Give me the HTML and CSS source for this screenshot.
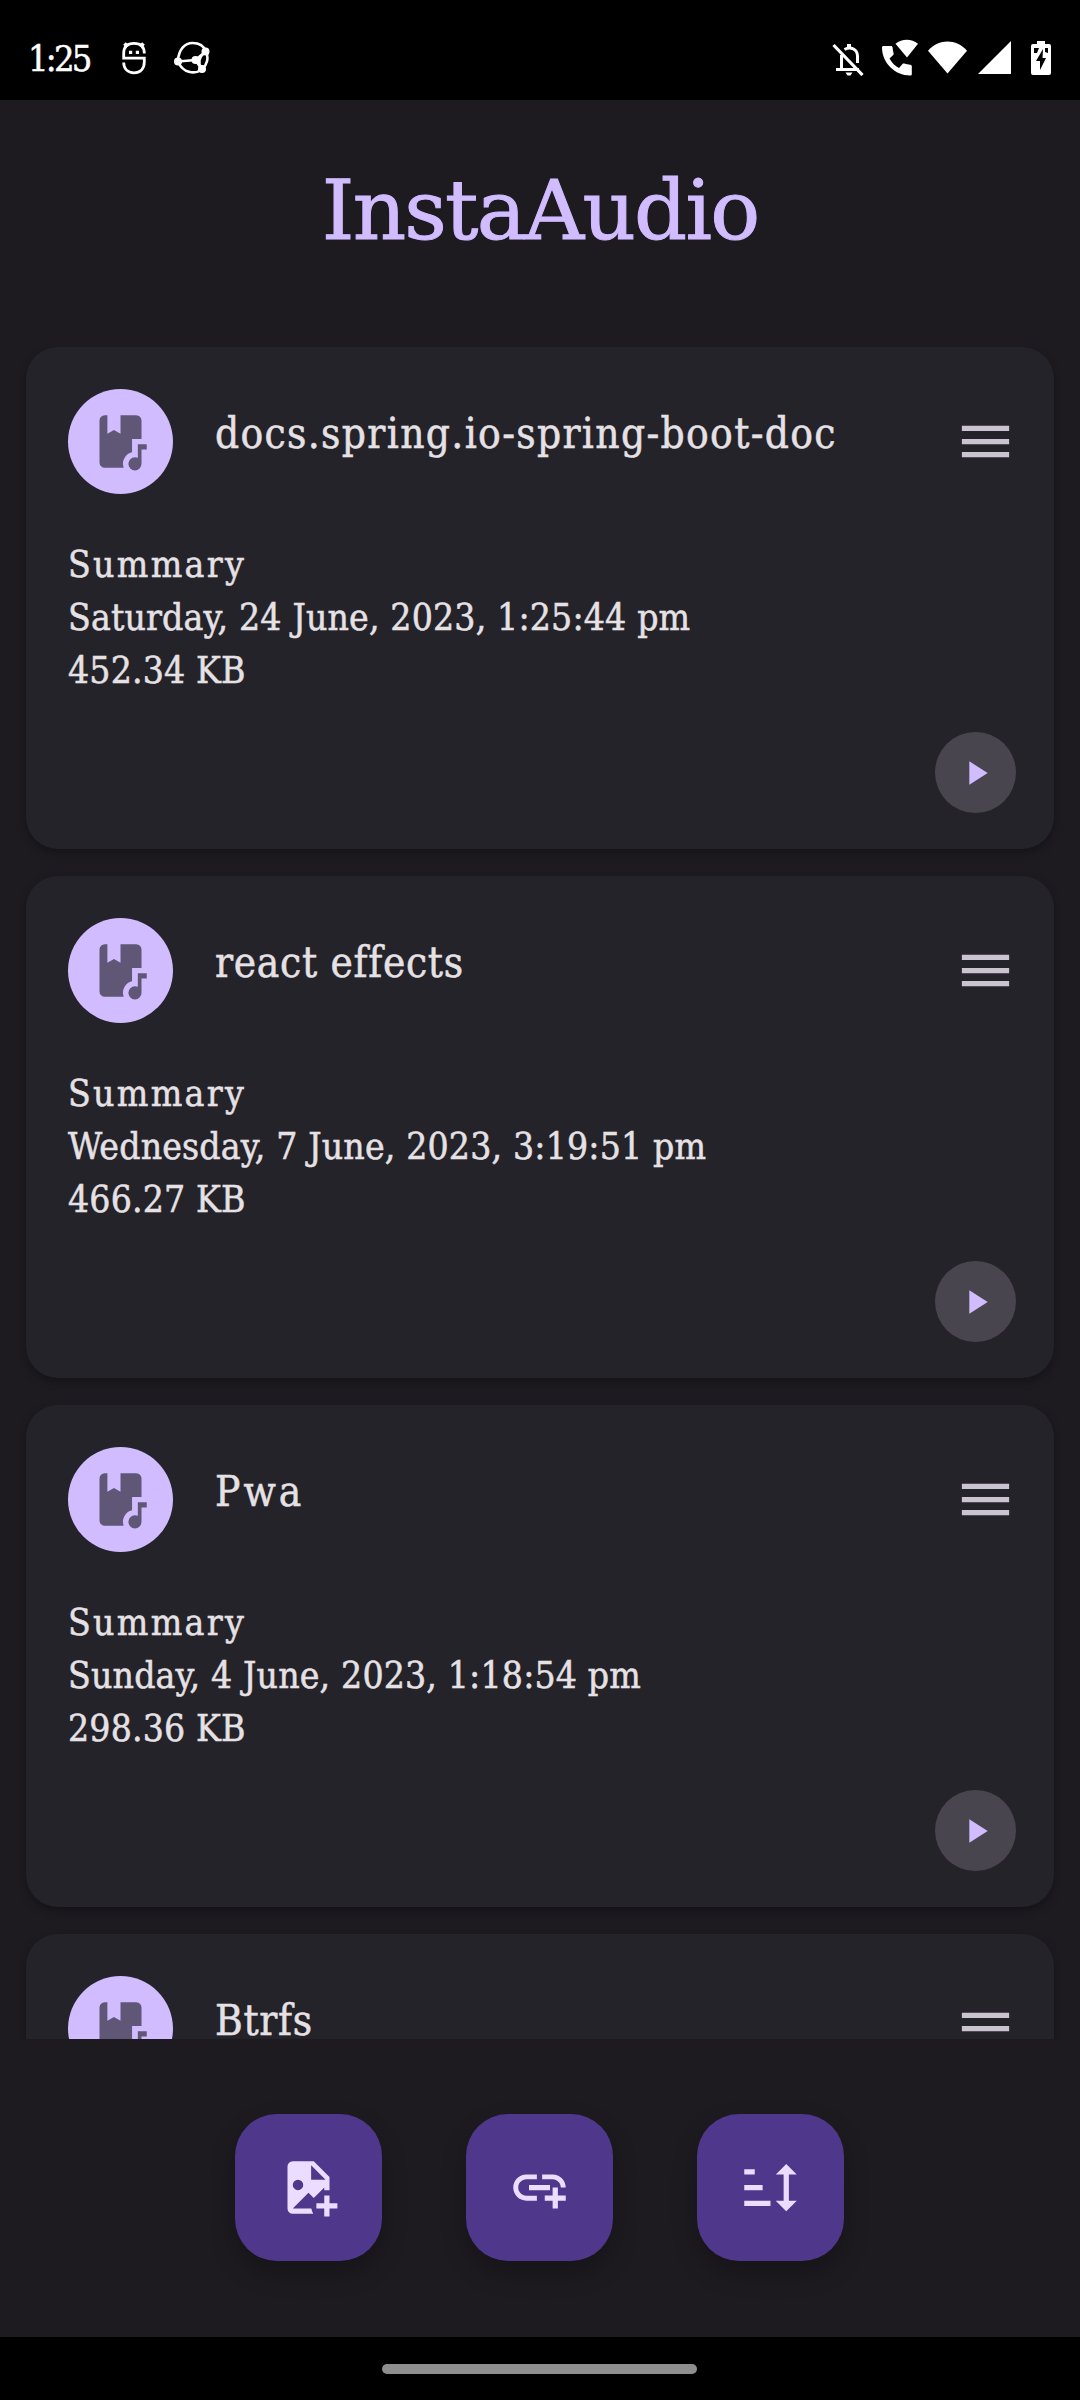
FILE: index.html
```
<!DOCTYPE html>
<html lang="en">
<head>
<meta charset="utf-8">
<title>InstaAudio</title>
<link rel="stylesheet" href="styles.css">
</head>
<body>
<svg width="0" height="0" class="defs" aria-hidden="true">
  <symbol id="book-music" viewBox="0 0 24 24">
    <path d="M16.4 11H20V4a2 2 0 0 0-2-2h-6v7L9.5 7.6 7 9V2H6a2 2 0 0 0-2 2v16a2 2 0 0 0 2 2h7.2A4.5 4.5 0 0 1 16.4 16.1z"/>
    <path d="M18.6 13H22v2h-2v5.5a2.5 2.5 0 1 1-2.5-2.5c.4 0 .75.07 1.1.23z"/>
  </symbol>
  <symbol id="menu" viewBox="0 0 24 24"><path d="M3 18h18v-2H3v2zm0-5h18v-2H3v2zm0-7v2h18V6H3z"/></symbol>
  <symbol id="play" viewBox="0 0 24 24"><path d="M8 5v14l11-7z"/></symbol>
</svg>
<div class="screen">
  <header class="status">
    <div class="status-left">
      <span class="clock">1:25</span>
      <svg class="st-face" viewBox="0 0 24 34" fill="none" stroke="#fff" stroke-width="2.8">
        <path d="M22.300 12.500C22.300 6 19 2.400 12 2.400S1.700 6 1.700 12.500V17.200H22.300V21C22.300 28 18 31.800 12 31.800S1.700 28 1.700 21.500"/>
        <path d="M5.500 5.500 2.500 2.500M18.500 5.500l3-3" stroke-width="3.800"/>
        <path d="M7 11.300h3.200M13.800 11.300h3.200" stroke-width="3.200"/>
      </svg>
      <svg class="st-orbit" viewBox="0 0 36 34" fill="none" stroke="#fff" stroke-width="2.600">
        <path d="M4 19C5 8 11 2 18.500 2 25 2 30 5 32 10.500 35 17 33 24 28 28.500 20 34 9 31.500 4.500 21.500"/>
        <path d="M4 20.500 21.500 19 31 11M21.500 19l6 9M30 12c-5 4-6 10-3 15"/>
        <g fill="#fff" stroke="none"><circle cx="4" cy="20.500" r="4"/><circle cx="21.500" cy="19" r="4"/><circle cx="31.500" cy="10.500" r="4"/><circle cx="28" cy="28" r="4"/></g>
      </svg>
    </div>
    <div class="status-right">
      <svg class="st-bell" viewBox="0 0 32 34" fill="none" stroke="#fff" stroke-width="3">
        <path d="M4 27.500h23M9.500 27.500V13M12.500 7.500C19 3.500 25.500 8 25.500 14v7"/>
        <path d="M17 2v5" stroke-width="4"/><path d="M13.500 30.500h7l-2 3h-3z" fill="#fff" stroke="none"/>
        <path d="M1.500 3 30.500 33" stroke-width="3.200"/>
      </svg>
      <svg class="st-call" viewBox="0 0 36 37" fill="#fff">
        <path d="M1.500 7h7.500c1 0 1.500.6 1.600 1.500.1 2 .5 4 1 5.700.2.7 0 1.300-.4 1.700L7.500 19.500c2.500 4.500 5.500 7.500 9.500 9.500l3.500-4c.5-.5 1.100-.6 1.700-.4 1.900.6 4 1 6 1.100 1 .1 1.600.7 1.600 1.600V35c0 1-.6 1.500-1.600 1.500C13 36.500 0 24 0 8.500 0 7.600.6 7 1.500 7z"/>
        <path d="M13.500 4.800C20-.6 29.500-.6 36 4.800L25 18.500z"/>
      </svg>
      <svg class="st-wifi" viewBox="0 0 40 33" fill="#fff"><path d="M0 9.500C11-3 29-3 40 9.500L20 33z"/></svg>
      <svg class="st-cell" viewBox="0 0 33 33" fill="#fff"><path d="M33 0v33H0z"/></svg>
      <svg class="st-batt" viewBox="0 0 20 34" fill="#fff" fill-rule="evenodd"><path d="M6 0h8v3h4a2 2 0 0 1 2 2v27a2 2 0 0 1-2 2H2a2 2 0 0 1-2-2V5a2 2 0 0 1 2-2h4zM3 7v5h3l2-5zM14 7v4l3 1V7zM12 8 5 20h4v9l6-12h-3.500z"/></svg>
    </div>
  </header>

  <h1 class="title"><span>InstaAudio</span></h1>

  <main class="list">
    <article class="card">
      <div class="card-head">
        <div class="avatar"><svg><use href="#book-music"/></svg></div>
        <h2 class="name name-long">docs.spring.io-spring-boot-doc</h2>
        <svg class="menu"><use href="#menu"/></svg>
      </div>
      <div class="meta"><p class="kind">Summary</p><p>Saturday, 24 June, 2023, 1:25:44 pm</p><p>452.34 KB</p></div>
      <div class="play"><svg><use href="#play"/></svg></div>
    </article>
    <article class="card">
      <div class="card-head">
        <div class="avatar"><svg><use href="#book-music"/></svg></div>
        <h2 class="name">react effects</h2>
        <svg class="menu"><use href="#menu"/></svg>
      </div>
      <div class="meta"><p class="kind">Summary</p><p>Wednesday, 7 June, 2023, 3:19:51 pm</p><p>466.27 KB</p></div>
      <div class="play"><svg><use href="#play"/></svg></div>
    </article>
    <article class="card">
      <div class="card-head">
        <div class="avatar"><svg><use href="#book-music"/></svg></div>
        <h2 class="name name-wide">Pwa</h2>
        <svg class="menu"><use href="#menu"/></svg>
      </div>
      <div class="meta"><p class="kind">Summary</p><p>Sunday, 4 June, 2023, 1:18:54 pm</p><p>298.36 KB</p></div>
      <div class="play"><svg><use href="#play"/></svg></div>
    </article>
    <article class="card">
      <div class="card-head">
        <div class="avatar"><svg><use href="#book-music"/></svg></div>
        <h2 class="name">Btrfs</h2>
        <svg class="menu"><use href="#menu"/></svg>
      </div>
    </article>
  </main>

  <div class="actions">
    <div class="fab"><svg viewBox="0 0 24 24"><path fill-rule="evenodd" d="M6 2h8l6 6v5.090a6 6 0 0 0-2 0V12l-4 4-2-2-6 6h7.090c.12.720.370 1.390.720 2H6a2 2 0 0 1-2-2V4a2 2 0 0 1 2-2zM13 3.500V9h5.500zM8 9a2 2 0 1 0 0 4 2 2 0 0 0 0-4z"/><path d="M18 15h2v3h3v2h-3v3h-2v-3h-3v-2h3z"/></svg></div>
    <div class="fab"><svg viewBox="0 0 24 24"><path d="M8 11h8v2H8zM20.100 12H22c0-2.760-2.240-5-5-5h-4v1.900h4c1.710 0 3.100 1.390 3.100 3.100zM3.900 12c0-1.710 1.390-3.100 3.100-3.100h4V7H7c-2.760 0-5 2.240-5 5s2.240 5 5 5h4v-1.900H7c-1.710 0-3.100-1.390-3.100-3.100zM19 12h-2v3h-3v2h3v3h2v-3h3v-2h-3z"/></svg></div>
    <div class="fab"><svg viewBox="0 0 24 24"><path d="M2 5h4v2H2zM2 11h7v2H2zM2 17h10v2H2zM18 3l4 4h-3v10h3l-4 4-4-4h3V7h-3z"/></svg></div>
  </div>

  <footer class="nav"><div class="pill"></div></footer>
</div>
</body>
</html>
```
FILE: styles.css
```
* { box-sizing: border-box; margin: 0; padding: 0; }
body {
  background: #1d1b20;
  font-family: "Roboto Slab", "DejaVu Serif Condensed", "DejaVu Serif", serif;
  color: #e6e1e5;
  -webkit-text-stroke: .5px currentColor;
}
svg { display: block; flex: none; }
.defs { position: absolute; }
.screen { width: 1080px; height: 2400px; display: flex; flex-direction: column; overflow: hidden; }

.status { height: 100px; flex: none; background: #000; color: #fff; display: flex; justify-content: space-between; padding: 0 29px 0 28px; }
.status-left, .status-right { display: flex; align-items: flex-start; }
.clock { width: 94px; font-size: 36px; line-height: 44px; margin-top: 37px; white-space: nowrap; letter-spacing: -2.8px; }
.st-face { width: 24px; height: 34px; margin-top: 41px; }
.st-orbit { width: 36px; height: 34px; margin: 41px 0 0 28px; }
.st-bell { width: 32px; height: 34px; margin: 42px 18px 0 0; }
.st-call { width: 36px; height: 37px; margin: 39px 10px 0 0; }
.st-wifi { width: 39px; height: 33px; margin: 41px 11px 0 0; }
.st-cell { width: 33px; height: 33px; margin: 41px 20px 0 0; }
.st-batt { width: 20px; height: 34px; margin-top: 41px; }

.title { height: 247px; flex: none; color: #d0bcff; font-family: "Roboto Slab", "DejaVu Serif", serif; font-size: 83px; line-height: 110px; font-weight: 400; text-align: center; padding-top: 56px; letter-spacing: -1.8px; -webkit-text-stroke-width: 1px; }

.list { height: 1692px; flex: none; overflow: hidden; padding: 0 26px; display: flex; flex-direction: column; gap: 27px; }
.card { height: 502px; flex: none; background: #242329; border-radius: 32px; padding: 42px 38px 36px 42px; display: flex; flex-direction: column; box-shadow: 0 4px 8px rgba(0, 0, 0, .3); }
.card-head { display: flex; align-items: center; height: 105px; }
.avatar { width: 105px; height: 105px; border-radius: 50%; background: #d0bcff; display: grid; place-items: center; }
.avatar svg { width: 63px; height: 63px; fill: #605777; }
.name { flex: 1; margin-left: 42px; font-size: 42px; font-weight: 400; line-height: 62px; padding-bottom: 16px; white-space: nowrap; letter-spacing: .7px; }
.name-long { letter-spacing: 1.33px; }
.name-wide { letter-spacing: 3px; }
.menu { width: 63px; height: 63px; margin-right: -1px; fill: #cac4d0; }
.meta { margin-top: 44px; font-size: 37px; line-height: 53px; white-space: nowrap; letter-spacing: .15px; }
.kind { letter-spacing: 2.3px; }
.play { width: 81px; height: 81px; border-radius: 50%; background: #49454f; margin: auto 0 0 auto; display: grid; place-items: center; }
.play svg { width: 40px; height: 40px; fill: #d0bcff; }

.actions { flex: 1; display: flex; gap: 84px; padding: 75px 0 0 235px; }
.fab { width: 147px; height: 147px; border-radius: 42px; background: #4f378b; display: grid; place-items: center; box-shadow: 0 12px 24px rgba(0, 0, 0, .25); }
.fab svg { width: 63px; height: 63px; fill: #eaddff; }

.nav { height: 63px; flex: none; background: #000; padding: 27px 0 0 382px; }
.pill { width: 315px; height: 10px; border-radius: 5px; background: #8e8e8e; }
```
